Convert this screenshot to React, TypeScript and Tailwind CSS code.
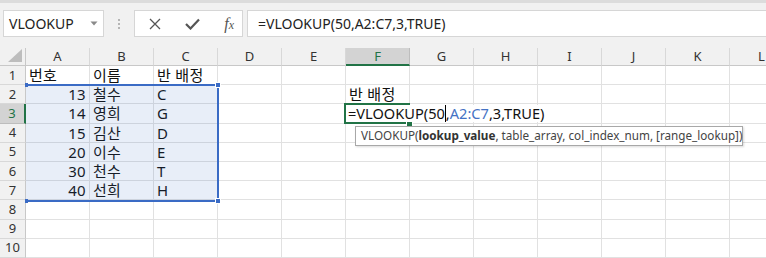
import React from 'react';
import clsx from 'clsx';

const COLS = ['A', 'B', 'C', 'D', 'E', 'F', 'G', 'H', 'I', 'J', 'K', 'L'];

type Cell = { text: string; align?: 'left' | 'right' };

const DATA: Record<number, Record<string, Cell>> = {
  1: { A: { text: '번호' }, B: { text: '이름' }, C: { text: '반 배정' } },
  2: { A: { text: '13', align: 'right' }, B: { text: '철수' }, C: { text: 'C' }, F: { text: '반 배정' } },
  3: { A: { text: '14', align: 'right' }, B: { text: '영희' }, C: { text: 'G' } },
  4: { A: { text: '15', align: 'right' }, B: { text: '김산' }, C: { text: 'D' } },
  5: { A: { text: '20', align: 'right' }, B: { text: '이수' }, C: { text: 'E' } },
  6: { A: { text: '30', align: 'right' }, B: { text: '천수' }, C: { text: 'T' } },
  7: { A: { text: '40', align: 'right' }, B: { text: '선희' }, C: { text: 'H' } },
};

const ROWS = [1, 2, 3, 4, 5, 6, 7, 8, 9, 10];

const FormulaBar = () => (
  <div className="h-[48px] bg-[#f1f1f1] border-t-[3px] border-[#dcdcdc] flex items-start pt-[7px] pl-[3px]">
    <div className="w-[101px] h-[27px] bg-white border border-[#d6d6d6] flex items-center justify-between pl-[5px] pr-[5px]">
      <span className="text-[14px] text-[#222] leading-none">VLOOKUP</span>
      <svg width="8" height="5" viewBox="0 0 8 5">
        <path d="M0.5 0.5 L7.5 0.5 L4 4.5 Z" fill="#8a8a8a" />
      </svg>
    </div>
    <div className="w-[30px] h-[27px] flex flex-col items-center justify-center gap-[2px]">
      <span className="w-[2px] h-[2px] bg-[#b5b5b5]" />
      <span className="w-[2px] h-[2px] bg-[#b5b5b5]" />
      <span className="w-[2px] h-[2px] bg-[#b5b5b5]" />
    </div>
    <div className="w-[109px] h-[27px] bg-white border border-[#d6d6d6] flex items-center">
      <div className="w-[36px] flex justify-center pl-[4px]">
        <svg width="12" height="12" viewBox="0 0 12 12">
          <path d="M1 1 L11 11 M11 1 L1 11" stroke="#555" strokeWidth="1.3" />
        </svg>
      </div>
      <div className="w-[36px] flex justify-center pl-[8px]">
        <svg width="15" height="12" viewBox="0 0 15 12">
          <path d="M1 6 L5.5 10.5 L14 1.5" stroke="#555" strokeWidth="2.2" fill="none" />
        </svg>
      </div>
      <div className="w-[36px] flex justify-center pl-[10px]">
        <span className="font-['Liberation_Serif',serif] italic text-[16px] text-[#555] leading-none">
          f<span className="text-[12px]">x</span>
        </span>
      </div>
    </div>
    <div className="flex-1 ml-[4px] h-[27px] bg-white border-l border-y border-[#d6d6d6] flex items-center pl-[10px]">
      <span className="text-[14px] text-[#222] leading-none">=VLOOKUP(50,A2:C7,3,TRUE)</span>
    </div>
  </div>
);

const cellText = (row: number, col: string): Cell | undefined => DATA[row]?.[col];

export default function App() {
  return (
    <div className="w-[766px] h-[258px] overflow-hidden relative bg-white font-['Noto_Sans','Noto_Sans_CJK_KR',sans-serif]">
      <FormulaBar />
      <div className="grid grid-cols-[26px_repeat(12,64px)] grid-rows-[18px_repeat(10,19.2px)]">
        {/* corner */}
        <div className="bg-[#f1f1f1] border-r border-b border-[#c8c8c8] flex items-end justify-end pr-[3px] pb-[3px]">
          <svg width="14" height="13" viewBox="0 0 14 13">
            <path d="M14 0 L14 13 L0 13 Z" fill="#bdbdbd" />
          </svg>
        </div>
        {COLS.map((c) => (
          <div
            key={c}
            className={clsx(
              'flex items-center justify-center text-[13px] leading-none border-r',
              c === 'F'
                ? 'bg-[#d3d3d3] text-[#217346] border-b-2 border-b-[#217346] border-r-[#bdbdbd]'
                : 'bg-[#f1f1f1] text-[#333] border-b border-b-[#c8c8c8] border-r-[#d8d8d8]'
            )}
          >
            {c}
          </div>
        ))}
        {ROWS.map((r) => (
          <React.Fragment key={r}>
            <div
              className={clsx(
                'flex items-center justify-center text-[13px] leading-none border-b',
                r === 3
                  ? 'bg-[#d3d3d3] text-[#217346] border-r-2 border-r-[#217346] border-b-[#bdbdbd]'
                  : 'bg-[#f1f1f1] text-[#333] border-r border-r-[#c8c8c8] border-b-[#d8d8d8]'
              )}
            >
              {r}
            </div>
            {COLS.map((c) => {
              const cell = cellText(r, c);
              return (
                <div
                  key={c}
                  className={clsx(
                    'border-r border-b border-[#e1e1e1] text-[15px] tracking-[0.3px] leading-[19px] text-[#111] whitespace-nowrap overflow-visible px-[3px]',
                    cell?.align === 'right' ? 'text-right' : 'text-left'
                  )}
                >
                  {cell?.text}
                </div>
              );
            })}
          </React.Fragment>
        ))}
      </div>

      {/* range highlight A2:C7 */}
      <div className="absolute left-[26px] top-[84px] w-[193px] h-[118px] border-t-2 border-r-2 border-b-2 border-[#3a6bc5] bg-[#4472c4]/[0.12] pointer-events-none" />
      <div className="absolute left-[25px] top-[83px] w-[3px] h-[4px] bg-[#3a6bc5]" />
      <div className="absolute left-[25px] top-[199px] w-[3px] h-[4px] bg-[#3a6bc5]" />
      <div className="absolute left-[215px] top-[82px] w-[6px] h-[6px] bg-[#3a6bc5] border border-white" />
      <div className="absolute left-[215px] top-[198px] w-[6px] h-[6px] bg-[#3a6bc5] border border-white" />

      {/* editing cell F3 */}
      <div className="absolute left-[344px] top-[103px] w-[66px] h-[21px] border-2 border-[#217346]" />
      <div className="absolute left-[406px] top-[120px] w-[7px] h-[7px] bg-[#217346] border border-white" />
      <div className="absolute left-[346px] top-[105px] h-[17px] pl-[2px] pr-[2px] bg-white flex items-center text-[14.6px] leading-[17px] text-[#111] whitespace-nowrap">
        <span>=VLOOKUP(50</span>
        <span className="w-[1px] h-[17px] bg-black" />
        <span>,</span>
        <span className="text-[#4472c4]">A2:C7</span>
        <span>,3,TRUE)</span>
      </div>

      {/* function tooltip */}
      <div className="absolute left-[355px] top-[126px] w-[388px] h-[20px] bg-white border border-[#a8a8a8] shadow-[1px_1px_2px_rgba(0,0,0,0.15)] flex items-center pl-[5px] text-[11.7px] text-[#444] leading-none whitespace-nowrap">
        VLOOKUP(<b className="font-bold text-[#333]">lookup_value</b>, table_array, col_index_num, [range_lookup])
      </div>
    </div>
  );
}
